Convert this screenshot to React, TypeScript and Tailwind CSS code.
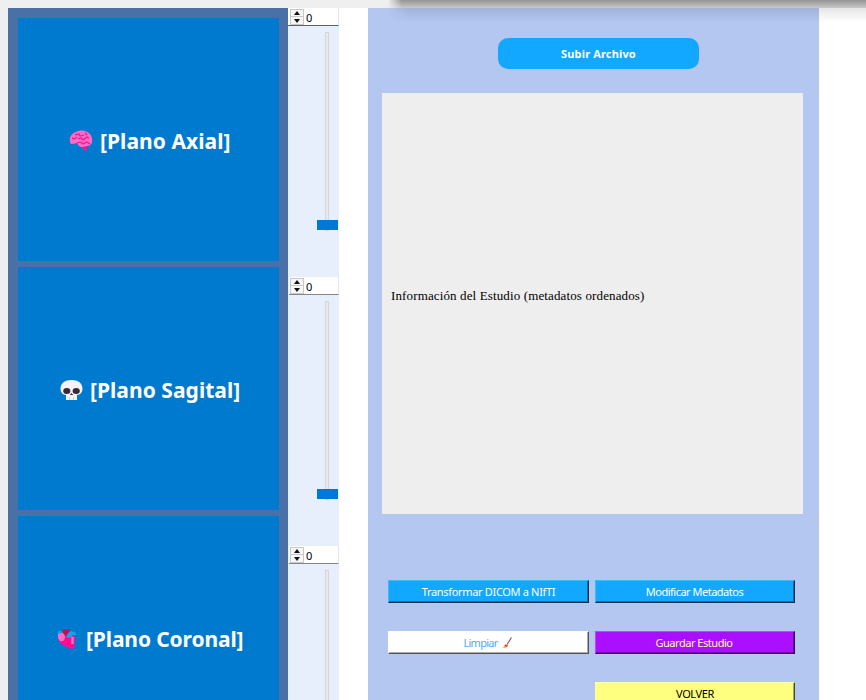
import React from "react";

function Brain() {
  return (
    <svg width="24" height="22" viewBox="0 0 24 22" className="block">
      <path d="M1 11C0 7 3 3 7 2C10 0 15 0 18 2C21 3 24 7 23 12C23 14 21 16 18 16L18 20L17 21L13 17C10 17 9 15 8 13L3 14C1 14 1 12 1 11Z" fill="#ff6bc5" />
      <path d="M3 8L5 9L8 7M6 5L10 4L11 6L15 5M9 9L12 8L14 10L18 7L20 8M8 13L12 12L14 14L18 12L21 14M16 3L18 5" fill="none" stroke="#e91595" strokeWidth="1.1" />
      <path d="M13 17L18 16V21H17Z" fill="#ff0c91" />
    </svg>
  );
}

function Skull() {
  return (
    <svg width="24" height="22" viewBox="0 0 24 22" className="block">
      <path d="M0.5 10C0.5 4 5 1 11.5 1S22.500 4 22.500 10C22.500 13 20 16 17 16V21H6V16C3 16 .5 13 .5 10Z" fill="#f5f2f7" />
      <ellipse cx="6.8" cy="12" rx="3.6" ry="2.9" fill="#382938" />
      <ellipse cx="16.2" cy="12" rx="3.6" ry="2.9" fill="#382938" />
      <path d="M11.5 14L13.2 16H9.8Z" fill="#382938" />
      <path d="M9.5 18V21M13.5 18V21" stroke="#c9c0d3" strokeWidth=".8" />
    </svg>
  );
}

function Heart() {
  return (
    <svg width="20" height="22" viewBox="0 0 20 22" className="block">
      <path d="M1 7L6 7L12 7L17 6L18 9L17.500 19L15 21L11 20L3 15L1 11Z" fill="#ff0c91" />
      <path d="M1 6C4 3 8 5 8 9C8 12 6 14 3 13L1 10Z" fill="#ff6bc5" />
      <path d="M15.500 9V16" stroke="#ff6bc5" strokeWidth="2.5" />
      <path d="M0 6L2 3L5 3L3 6M9 9L11 5L14 3L19 5L19 7L16 7L13 10Z" fill="#12a5e8" />
      <path d="M5 1L7 3L8 1L10 2L13 1L12 4L9 8L6 5Z" fill="#c3104c" />
    </svg>
  );
}

function Brush() {
  return (
    <svg width="11" height="12" viewBox="0 0 11 12" className="block">
      <path d="M9.5 .5L5 7.5" stroke="#8d6260" strokeWidth="1.3" />
      <path d="M3 7.500L6 8L5 10L2 10Z" fill="#f03a17" />
      <path d="M0 10.5L3 9L5 10L3 11Z" fill="#ffb638" />
    </svg>
  );
}

function Plane({ icon, label, pad, gap, spacing }: { icon: React.ReactNode; label: string; pad: string; gap: string; spacing: string }) {
  return (
    <div className={`flex h-[243px] shrink-0 items-center bg-[#007acf] pt-[2px] text-[21px] leading-[28px] font-bold whitespace-nowrap text-white ${pad} ${gap}`}>
      {icon}
      <span className={spacing}>{label}</span>
    </div>
  );
}

function Control({ active = false }: { active?: boolean }) {
  return (
    <div className="flex h-[269px] shrink-0 flex-col">
      <div className={`flex h-[18px] border-r border-b border-r-[#dfe5ec] bg-white pt-px pl-px ${active ? "border-b-[#0078d4]" : "ml-px border-b-[#868686]"}`}>
        <div className={`flex h-[16px] w-[14px] flex-col border border-[#c8c8c8] bg-[#f7f7f7] ${active ? "ml-px" : ""}`}>
          <div className="flex h-[7px] items-center justify-center border-b border-[#c8c8c8]">
            <svg width="6" height="4" viewBox="0 0 6 4"><path d="M0 4L3 0L6 4Z" fill="#111" /></svg>
          </div>
          <div className="flex h-[7px] items-center justify-center">
            <svg width="6" height="4" viewBox="0 0 6 4"><path d="M0 0H6L3 4Z" fill="#111" /></svg>
          </div>
        </div>
        <span className="ml-[2px] text-[11px] leading-[17px] text-black">0</span>
      </div>
      <div className="mt-[6px] ml-[29px] flex h-[199px] w-[21px] flex-col">
        <div className="ml-2 h-[188px] w-[4px] shrink-0 border border-b-0 border-[#d3d6d5] bg-[#e7eaea]" />
        <div className="h-[10px] w-[21px] shrink-0 bg-[#0078d7]" />
        <div className="ml-2 h-px w-[4px] shrink-0 bg-[#d3d6d5]" />
      </div>
    </div>
  );
}

function ActionButton({ children, className }: { children: React.ReactNode; className: string }) {
  return (
    <button className={`flex h-[23px] items-center justify-center border pt-px text-[11px] leading-[16px] whitespace-nowrap ${className}`}>
      {children}
    </button>
  );
}

export default function App() {
  return (
    <main className="relative flex h-[700px] w-[866px] overflow-hidden bg-[#efefef] pt-2 pl-2 font-['Noto_Sans',sans-serif]">
      <section className="flex w-[280px] shrink-0 flex-col gap-[6px] bg-[#4a70a8] pt-[10px] pr-[9px] pl-[10px]">
        <Plane icon={<Brain />} label="[Plano Axial]" pad="pl-[51px]" gap="gap-[7px]" spacing="tracking-[0.06px]" />
        <Plane icon={<Skull />} label="[Plano Sagital]" pad="pl-[42px]" gap="gap-[6px]" spacing="tracking-[0.04px]" />
        <Plane icon={<Heart />} label="[Plano Coronal]" pad="pl-[39px]" gap="gap-[9px]" spacing="tracking-[-0.12px]" />
      </section>
      <aside className="flex w-[51px] shrink-0 flex-col bg-[#e7effd]">
        <Control active />
        <Control />
        <Control />
      </aside>
      <div className="w-[29px] shrink-0 bg-white" />
      <section className="w-[451px] shrink-0 bg-[#b4c7f0] pt-[30px] pl-[14px]">
        <button className="ml-[116px] flex h-[31px] w-[201px] items-center justify-center rounded-[10px] bg-[#12a8ff] pt-[2px] text-[11px] font-bold tracking-[0.15px] text-white">
          Subir Archivo
        </button>
        <div className="mt-6 flex h-[421px] w-[421px] items-center bg-[#eeeeee] pl-[9px] font-['Liberation_Serif',serif] text-[13px] leading-[16px] tracking-[0.13px] text-black">
          <span className="mt-[-16px]">Información del Estudio (metadatos ordenados)</span>
        </div>
        <div className="mt-[66px] ml-[6px] grid w-[407px] grid-cols-[201px_200px] gap-x-[6px] gap-y-7">
          <ActionButton className="border-t-[#3db8ff] border-r-[#04304a] border-b-[#04304a] border-l-[#3db8ff] bg-[#12a8ff] tracking-[-0.33px] text-white shadow-[inset_-1px_-1px_0_#0c70aa]">Transformar DICOM a NIfTI</ActionButton>
          <ActionButton className="border-t-[#3db8ff] border-r-[#04304a] border-b-[#04304a] border-l-[#3db8ff] bg-[#12a8ff] pr-px tracking-[-0.5px] text-white shadow-[inset_-1px_-1px_0_#0c70aa]">Modificar Metadatos</ActionButton>
          <ActionButton className="gap-[5px] border-t-white border-r-[#555] border-b-[#555] border-l-white bg-white tracking-[-0.75px] text-[#55aaff] shadow-[inset_-1px_-1px_0_#aaa]">Limpiar <Brush /></ActionButton>
          <ActionButton className="border-t-[#bd47ff] border-r-[#31054a] border-b-[#31054a] border-l-[#bd47ff] bg-[#aa0fff] pr-[2px] tracking-[-0.47px] text-[#ffff9a] shadow-[inset_-1px_-1px_0_#710aaa]">Guardar Estudio</ActionButton>
          <div />
          <ActionButton className="border-t-[#ffffa6] border-r-[#4a4a25] border-b-[#4a4a25] border-l-[#ffffa6] bg-[#ffff7f] tracking-[-0.4px] text-black shadow-[inset_-1px_-1px_0_#aaaa55]">VOLVER</ActionButton>
        </div>
      </section>
      <div className="flex-1 bg-white" />
      <div className="pointer-events-none absolute top-0 left-[388px] h-2 w-[478px] bg-linear-to-b from-black/38 to-black/16 mask-[linear-gradient(to_right,transparent,black_14px)]" />
      <div className="pointer-events-none absolute top-2 left-[388px] h-[14px] w-[478px] bg-linear-to-b from-black/10 to-transparent mask-[linear-gradient(to_right,transparent,black_20px)]" />
    </main>
  );
}
